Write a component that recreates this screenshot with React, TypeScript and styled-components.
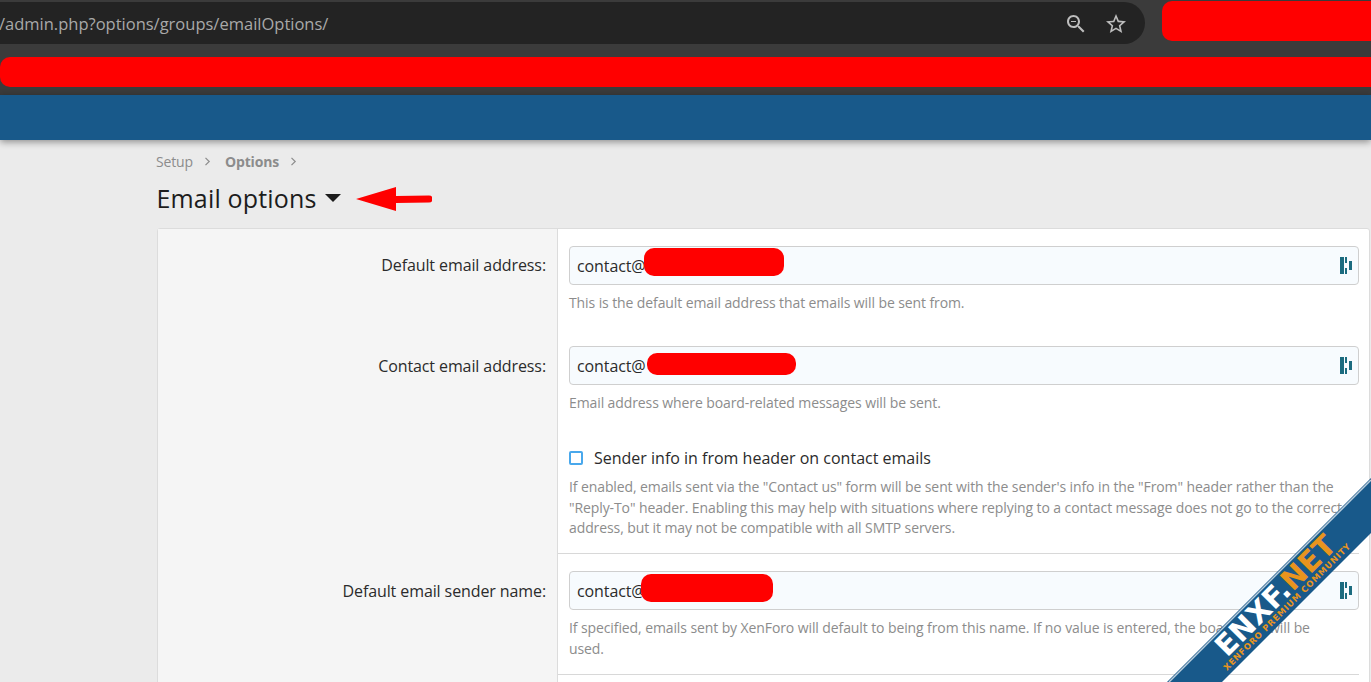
import { FunctionComponent } from 'react';
import styled, { createGlobalStyle } from 'styled-components';

const GlobalStyle = createGlobalStyle`
  html, body {
    margin: 0;
    padding: 0;
    background: #ebebeb;
  }
  body {
    font-family: "Open Sans", "Noto Sans", "Liberation Sans", sans-serif;
  }
`;

const Page = styled.div`
  position: relative;
  width: 1371px;
  height: 682px;
  overflow: hidden;
`;

const BrowserChrome = styled.header`
  height: 95px;
  background: #3b3b3b;
  display: flex;
  flex-direction: column;
`;

const AddressRow = styled.div`
  display: flex;
  align-items: flex-start;
  height: 57px;
  gap: 17px;
`;

const AddressBar = styled.div`
  margin-top: 2px;
  width: 1145px;
  height: 42px;
  background: #232323;
  border-radius: 0 21px 21px 0;
  display: flex;
  align-items: center;
  justify-content: space-between;
  box-sizing: border-box;
  padding-right: 17px;
  color: #a9a9a9;
  font-size: 16.5px;
`;

const UrlText = styled.span`
  margin-left: -1px;
`;

const AddressIcons = styled.div`
  display: flex;
  align-items: center;
  gap: 16px;
  margin-top: 2px;
  color: #bdbdbd;
`;

const RedBlock = styled.div`
  margin-top: 1px;
  flex: 1;
  height: 40px;
  background: #ff0000;
  border-radius: 10px 0 0 10px;
`;

const RedBar = styled.div`
  height: 30px;
  background: #ff0000;
  border-radius: 10px 0 0 10px;
`;

const BlueBar = styled.div`
  position: relative;
  height: 45px;
  background: #18598a;
  box-shadow: 0 2px 7px rgba(0, 0, 0, 0.4);
`;

const Content = styled.main`
  padding: 12px 1px 0 157px;
`;

const Breadcrumb = styled.nav`
  display: flex;
  align-items: center;
  height: 18px;
  margin-left: -1px;
  color: #8c8c8c;
  font-size: 14px;
  letter-spacing: -0.15px;
`;

const CrumbArrow = styled.span`
  width: 7px;
  margin: 0 14px 0 11px;
  display: block;
  svg {
    display: block;
  }
`;

const Title = styled.h1`
  display: flex;
  align-items: center;
  margin: 11px 0 13px -0.5px;
  height: 34px;
  font-size: 25px;
  font-weight: 400;
  letter-spacing: 0.16px;
  color: #1c1c1c;
`;

const TitleCaret = styled.span`
  width: 0;
  height: 0;
  margin: 0 0 0 9px;
  border-left: 8px solid transparent;
  border-right: 8px solid transparent;
  border-top: 8px solid #1c1c1c;
`;

const Arrow = styled.svg`
  margin: 2px 0 0 15px;
`;

const Card = styled.section`
  background: #fff;
  border: 1px solid #dcdcdc;
  border-radius: 3px 3px 0 0;
`;

const Row = styled.div`
  display: grid;
  grid-template-columns: 400px 1fr;
`;

const LabelCell = styled.div<{ $top?: number }>`
  background: #f5f5f5;
  border-right: 1px solid #dcdcdc;
  box-sizing: border-box;
  padding: ${(p) => p.$top ?? 0}px 11px 0 0;
  text-align: right;
  font-size: 16px;
  letter-spacing: -0.1px;
  line-height: 20px;
  color: #2b2b2b;
`;

const FieldCell = styled.div`
  padding-right: 10px;
`;

const FieldBody = styled.div<{ $top: number; $bottom: number; $ruled?: boolean }>`
  padding: ${(p) => p.$top}px 0 ${(p) => p.$bottom}px 11px;
  border-bottom: ${(p) => (p.$ruled ? '1px solid #d8d8d8' : 'none')};
`;

const InputBox = styled.div`
  position: relative;
  height: 39px;
  box-sizing: border-box;
  border: 1px solid #cfcfcf;
  border-radius: 4px;
  background: #f7fbfe;
  display: flex;
  align-items: center;
  justify-content: space-between;
  padding: 0 6px 0 7px;
  font-size: 16px;
  letter-spacing: -0.1px;
  color: #2b2b2b;
`;

const Scribble = styled.span<{ $left: number; $top: number; $width: number; $height: number }>`
  position: absolute;
  left: ${(p) => p.$left}px;
  top: ${(p) => p.$top}px;
  width: ${(p) => p.$width}px;
  height: ${(p) => p.$height}px;
  background: #ff0000;
  border-radius: 10px;
`;

const Hint = styled.p`
  margin: 8px 0 0;
  font-size: 14px;
  line-height: 20.5px;
  letter-spacing: -0.1px;
  color: #8c8c8c;
`;

const CheckRow = styled.label`
  display: flex;
  align-items: center;
  gap: 11px;
  height: 20px;
  margin-bottom: 9px;
  font-size: 16px;
  color: #2b2b2b;
`;

const CheckBox = styled.span`
  width: 14px;
  height: 14px;
  box-sizing: border-box;
  border: 2px solid #49a8ec;
  border-radius: 2px;
  background: #fff;
`;

const Ribbon = styled.svg`
  position: absolute;
  right: 0;
  bottom: 0;
`;

const RibbonBig = styled.text`
  font-family: "DejaVu Sans", sans-serif;
  font-weight: 700;
  font-size: 29px;
`;

const RibbonSmall = styled.text`
  font-family: "DejaVu Sans", sans-serif;
  font-weight: 700;
  font-size: 8.5px;
  letter-spacing: 0.75px;
  fill: #e8941e;
`;

const BrandIcon: FunctionComponent = () => (
  <svg width="12" height="17" viewBox="0 0 12 17" fill="#1b6b7f">
    <rect x="0" y="0" width="4" height="17" />
    <rect x="5" y="0" width="2" height="6" />
    <rect x="5" y="11" width="2" height="6" />
    <rect x="9" y="4" width="3" height="9" />
  </svg>
);

const Chevron: FunctionComponent = () => (
  <CrumbArrow>
    <svg width="7" height="9" viewBox="0 0 7 9" fill="none" stroke="#8c8c8c" strokeWidth="1.2">
      <path d="M1.5 .8 5.2 4.5 1.5 8.2" />
    </svg>
  </CrumbArrow>
);

const ZoomOutIcon: FunctionComponent = () => (
  <svg width="24" height="24" viewBox="0 0 24 24" fill="currentColor">
    <path d="M15.5 14h-.79l-.28-.27C15.41 12.59 16 11.11 16 9.5 16 5.91 13.09 3 9.5 3S3 5.91 3 9.5 5.91 16 9.5 16c1.61 0 3.09-.59 4.23-1.57l.27.28v.79l5 4.99L20.49 19l-4.99-5zm-6 0C7.01 14 5 11.99 5 9.5S7.01 5 9.5 5 14 7.01 14 9.5 11.99 14 9.5 14zM7 9h5v1H7z" />
  </svg>
);

const StarIcon: FunctionComponent = () => (
  <svg width="24" height="24" viewBox="0 0 24 24" fill="currentColor">
    <path d="M22 9.24l-7.19-.62L12 2 9.19 8.63 2 9.24l5.46 4.73L5.82 21 12 17.27 18.18 21l-1.63-7.03L22 9.24zM12 15.4l-3.76 2.27 1-4.28-3.32-2.88 4.38-.38L12 6.1l1.71 4.04 4.38.38-3.32 2.88 1 4.28L12 15.4z" />
  </svg>
);

interface EmailFieldProps {
  left: number;
  top: number;
  width: number;
  height: number;
}

const EmailField: FunctionComponent<EmailFieldProps> = ({ left, top, width, height }) => (
  <InputBox>
    <span>contact@</span>
    <BrandIcon />
    <Scribble $left={left} $top={top} $width={width} $height={height} />
  </InputBox>
);

const App: FunctionComponent = () => {
  return (
    <Page>
      <GlobalStyle />
      <BrowserChrome>
        <AddressRow>
          <AddressBar>
            <UrlText>/admin.php?options/groups/emailOptions/</UrlText>
            <AddressIcons>
              <ZoomOutIcon />
              <StarIcon />
            </AddressIcons>
          </AddressBar>
          <RedBlock />
        </AddressRow>
        <RedBar />
      </BrowserChrome>
      <BlueBar />
      <Content>
        <Breadcrumb>
          <span>Setup</span>
          <Chevron />
          <strong>Options</strong>
          <Chevron />
        </Breadcrumb>
        <Title>
          Email options
          <TitleCaret />
          <Arrow width="76" height="24" viewBox="0 0 76 24" fill="#ff0000">
            <path d="M0 12 40 0v9l33-.5a3.500 3.500 0 0 1 0 7L40 16v8z" />
          </Arrow>
        </Title>
        <Card>
          <Row>
            <LabelCell $top={26}>Default email address:</LabelCell>
            <FieldCell>
              <FieldBody $top={17} $bottom={0}>
                <EmailField left={74} top={1} width={140} height={28} />
                <Hint>This is the default email address that emails will be sent from.</Hint>
              </FieldBody>
            </FieldCell>
          </Row>
          <Row>
            <LabelCell $top={42}>Contact email address:</LabelCell>
            <FieldCell>
              <FieldBody $top={32.5} $bottom={0}>
                <EmailField left={77} top={6} width={149} height={22} />
                <Hint>Email address where board-related messages will be sent.</Hint>
              </FieldBody>
            </FieldCell>
          </Row>
          <Row>
            <LabelCell />
            <FieldCell>
              <FieldBody $top={34.5} $bottom={14.5} $ruled>
                <CheckRow>
                  <CheckBox />
                  Sender info in from header on contact emails
                </CheckRow>
                <Hint>
                  If enabled, emails sent via the "Contact us" form will be sent with the sender's info in the "From" header rather than the
                  "Reply-To" header. Enabling this may help with situations where replying to a contact message does not go to the correct
                  address, but it may not be compatible with all SMTP servers.
                </Hint>
              </FieldBody>
            </FieldCell>
          </Row>
          <Row>
            <LabelCell $top={27}>Default email sender name:</LabelCell>
            <FieldCell>
              <FieldBody $top={17} $bottom={15} $ruled>
                <EmailField left={71} top={2} width={132} height={28} />
                <Hint>
                  If specified, emails sent by XenForo will default to being from this name. If no value is entered, the board title will be
                  <br />
                  used.
                </Hint>
              </FieldBody>
            </FieldCell>
          </Row>
          <Row>
            <LabelCell />
            <FieldCell>
              <FieldBody $top={30} $bottom={0} />
            </FieldCell>
          </Row>
        </Card>
      </Content>
      <Ribbon width="204" height="204" viewBox="0 0 204 204">
        <polygon points="204,0 204,55 55,204 0,204" fill="#18598a" />
        <line x1="204" y1="2" x2="2" y2="204" stroke="#ffffff" strokeWidth="1.5" opacity="0.7" />
        <g transform="translate(60 180) rotate(-45)">
          <RibbonBig x="0" y="0">
            <tspan fill="#ffffff">ENXF.</tspan>
            <tspan fill="#e8941e">NET</tspan>
          </RibbonBig>
        </g>
        <g transform="translate(60 193) rotate(-45)">
          <RibbonSmall x="0" y="0">XENFORO PREMIUM COMMUNITY</RibbonSmall>
        </g>
      </Ribbon>
    </Page>
  );
};

export default App;
